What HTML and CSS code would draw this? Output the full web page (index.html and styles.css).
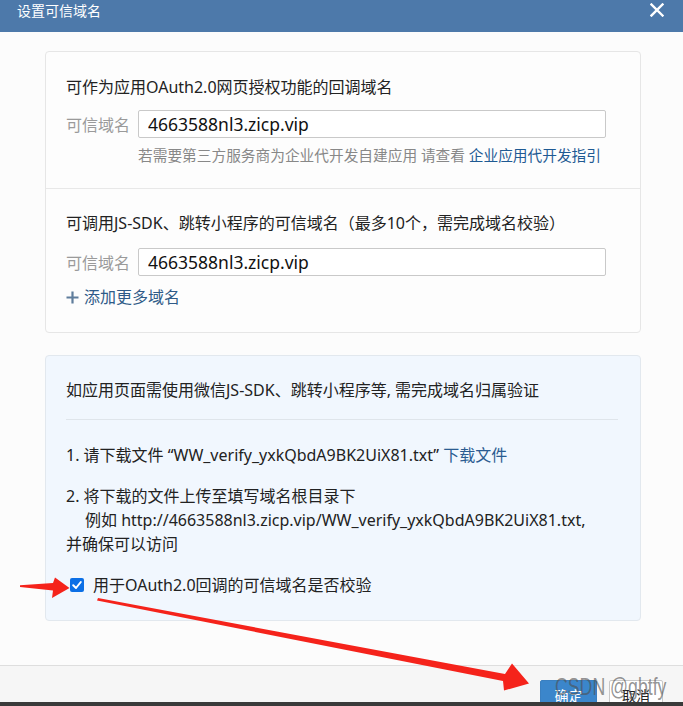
FILE: index.html
```html
<!DOCTYPE html>
<html lang="zh-CN">
<head>
    <meta charset="UTF-8">
    <meta name="viewport" content="width=device-width, initial-scale=1.0">
    <title>设置可信域名</title>
    <link rel="stylesheet" href="styles.css">
</head>
<body>
    <div class="dialog">
        <div class="dialog-header">
            <span class="dialog-title">设置可信域名</span>
            <svg class="close-icon" width="14" height="14" viewBox="0 0 14 14">
                <path d="M1.5 1.5 L12.5 12.5 M12.5 1.5 L1.5 12.5" stroke="#fff" stroke-width="2.4" stroke-linecap="square"/>
            </svg>
        </div>

        <div class="dialog-body">
            <div class="card">
                <div class="section">
                    <div class="section-title">可作为应用OAuth2.0网页授权功能的回调域名</div>
                    <div class="field">
                        <label class="field-label">可信域名</label>
                        <input class="field-input" type="text" value="4663588nl3.zicp.vip">
                    </div>
                    <div class="hint">若需要第三方服务商为企业代开发自建应用 请查看 <a href="#">企业应用代开发指引</a></div>
                </div>
                <div class="section">
                    <div class="section-title">可调用JS-SDK、跳转小程序的可信域名（最多10个，需完成域名校验）</div>
                    <div class="field">
                        <label class="field-label">可信域名</label>
                        <input class="field-input" type="text" value="4663588nl3.zicp.vip">
                    </div>
                    <a class="add-more" href="#">
                        <svg width="13" height="13" viewBox="0 0 13 13"><path d="M6.5 0.5 V12.5 M0.5 6.5 H12.5" stroke="#5f7d9c" stroke-width="2.2"/></svg>
                        添加更多域名
                    </a>
                </div>
            </div>

            <div class="verify-box">
                <div class="verify-title">如应用页面需使用微信JS-SDK、跳转小程序等, 需完成域名归属验证</div>
                <div class="verify-step">1. 请下载文件 “WW_verify_yxkQbdA9BK2UiX81.txt” <a href="#">下载文件</a></div>
                <div class="verify-step step-two">
                    2. 将下载的文件上传至填写域名根目录下<br>
                    <span class="indent">例如 http://4663588nl3.zicp.vip/WW_verify_yxkQbdA9BK2UiX81.txt,</span><br>
                    并确保可以访问
                </div>
                <label class="check-row">
                    <span class="checkbox">
                        <svg width="14" height="14" viewBox="0 0 14 14"><path d="M3.2 7.2 L6 10 L10.8 4" fill="none" stroke="#fff" stroke-width="2" stroke-linecap="round" stroke-linejoin="round"/></svg>
                    </span>
                    用于OAuth2.0回调的可信域名是否校验
                </label>
            </div>
        </div>

        <div class="dialog-footer">
            <button class="btn btn-primary">确定</button>
            <button class="btn">取消</button>
        </div>
        <div class="taskbar"></div>
    </div>

    <!-- 标注箭头 -->
    <svg class="annotations" width="683" height="706" viewBox="0 0 683 706">
        <polygon fill="#f5231b" points="20,585.3 53,583 55,577.5 69.5,588 52,598 53,590.5 20,587"/>
        <polygon fill="#f5231b" points="98,598 505,674 512,663.5 529,683.5 504,690.5 503,681 97,600.5"/>
    </svg>
    <div class="watermark">CSDN @gbtfy</div>
</body>
</html>
```

FILE: styles.css
```css
body {
    margin: 0;
    background-color: #fcfcfc;
    font-family: "Noto Sans", "Noto Sans CJK SC", sans-serif;
    color: #222;
    overflow: hidden;
}
a {
    color: #1f5a93;
    text-decoration: none;
}
.dialog {
    position: relative;
    height: 706px;
    display: flex;
    flex-direction: column;
}
.dialog-header {
    height: 32px;
    background-color: #4d79aa;
    display: flex;
    justify-content: space-between;
    align-items: flex-start;
    padding: 0 19px 0 17px;
    flex-shrink: 0;
}
.dialog-title {
    color: #fff;
    font-size: 14px;
    line-height: 20px;
    font-family: "Noto Sans CJK SC", sans-serif;
}
.close-icon {
    margin-top: 3px;
}
.dialog-body {
    flex: 1;
    padding: 19px 42px 0 45px;
}
.card {
    background-color: #fdfdfd;
    border: 1px solid #e6e6e6;
    border-radius: 4px;
}
.section {
    padding: 25px 20px 23px;
}
.section + .section {
    border-top: 1px solid #e8e8e8;
    padding-top: 24px;
}
.section-title {
    font-size: 16px;
    line-height: 20px;
}
.field {
    display: flex;
    align-items: center;
    margin-top: 13px;
}
.section + .section .field {
    margin-top: 15px;
}
.field-label {
    width: 72px;
    font-size: 16px;
    color: #9a9a9a;
}
.field-input {
    width: 468px;
    height: 28px;
    box-sizing: border-box;
    border: 1px solid #c9c9c9;
    border-radius: 2px;
    padding: 0 9px;
    font-family: inherit;
    font-size: 17.5px;
    color: #111;
    background-color: #fff;
}
.hint {
    margin: 7px 0 0 72px;
    font-size: 14.7px;
    line-height: 20px;
    color: #888;
}
.add-more {
    display: inline-flex;
    align-items: center;
    gap: 5px;
    margin-top: 11px;
    font-size: 16px;
    line-height: 20px;
    color: #2f5b88;
}
.verify-box {
    margin-top: 22px;
    background-color: #f1f7fe;
    border: 1px solid #e2e8ee;
    border-radius: 4px;
    padding: 23px 22px 23px 20px;
    font-size: 16px;
}
.verify-title {
    line-height: 22px;
    padding-bottom: 18px;
    border-bottom: 1px solid #dfe5eb;
}
.verify-step {
    line-height: 24px;
    margin-top: 23px;
}
.verify-step a {
    color: #2b5c91;
}
.step-two {
    margin-top: 17px;
    line-height: 24px;
}
.indent {
    padding-left: 19px;
}
.check-row {
    display: flex;
    align-items: center;
    gap: 9px;
    margin-top: 17px;
    line-height: 24px;
    padding-left: 4px;
}
.checkbox {
    width: 14px;
    height: 14px;
    border-radius: 2px;
    background-color: #0b6fe6;
    display: flex;
}
.dialog-footer {
    height: 36px;
    border-top: 1px solid #dedede;
    background-color: #f6f6f6;
    display: flex;
    justify-content: flex-end;
    gap: 12px;
    padding-right: 20px;
    overflow: hidden;
    flex-shrink: 0;
    margin-top: auto;
}
.btn {
    margin-top: 14px;
    height: 30px;
    width: 54px;
    border: 1px solid #c8c8c8;
    border-radius: 2px;
    background-color: #fff;
    font-family: "Noto Sans CJK SC", sans-serif;
    font-size: 14px;
    color: #222;
    padding: 0;
}
.btn-primary {
    width: 57px;
    background-color: #3b86cb;
    border-color: #3a7fc0;
    color: #fff;
}
.taskbar {
    height: 4px;
    background-color: #3a3a3a;
    flex-shrink: 0;
}
.annotations {
    position: absolute;
    top: 0;
    left: 0;
    pointer-events: none;
}
.watermark {
    position: absolute;
    left: 555px;
    top: 674px;
    font-family: "Liberation Sans", Arial, sans-serif;
    font-size: 23px;
    color: rgba(80, 80, 80, 0.62);
    transform: scaleX(0.77);
    transform-origin: left top;
    pointer-events: none;
    white-space: nowrap;
}
```
